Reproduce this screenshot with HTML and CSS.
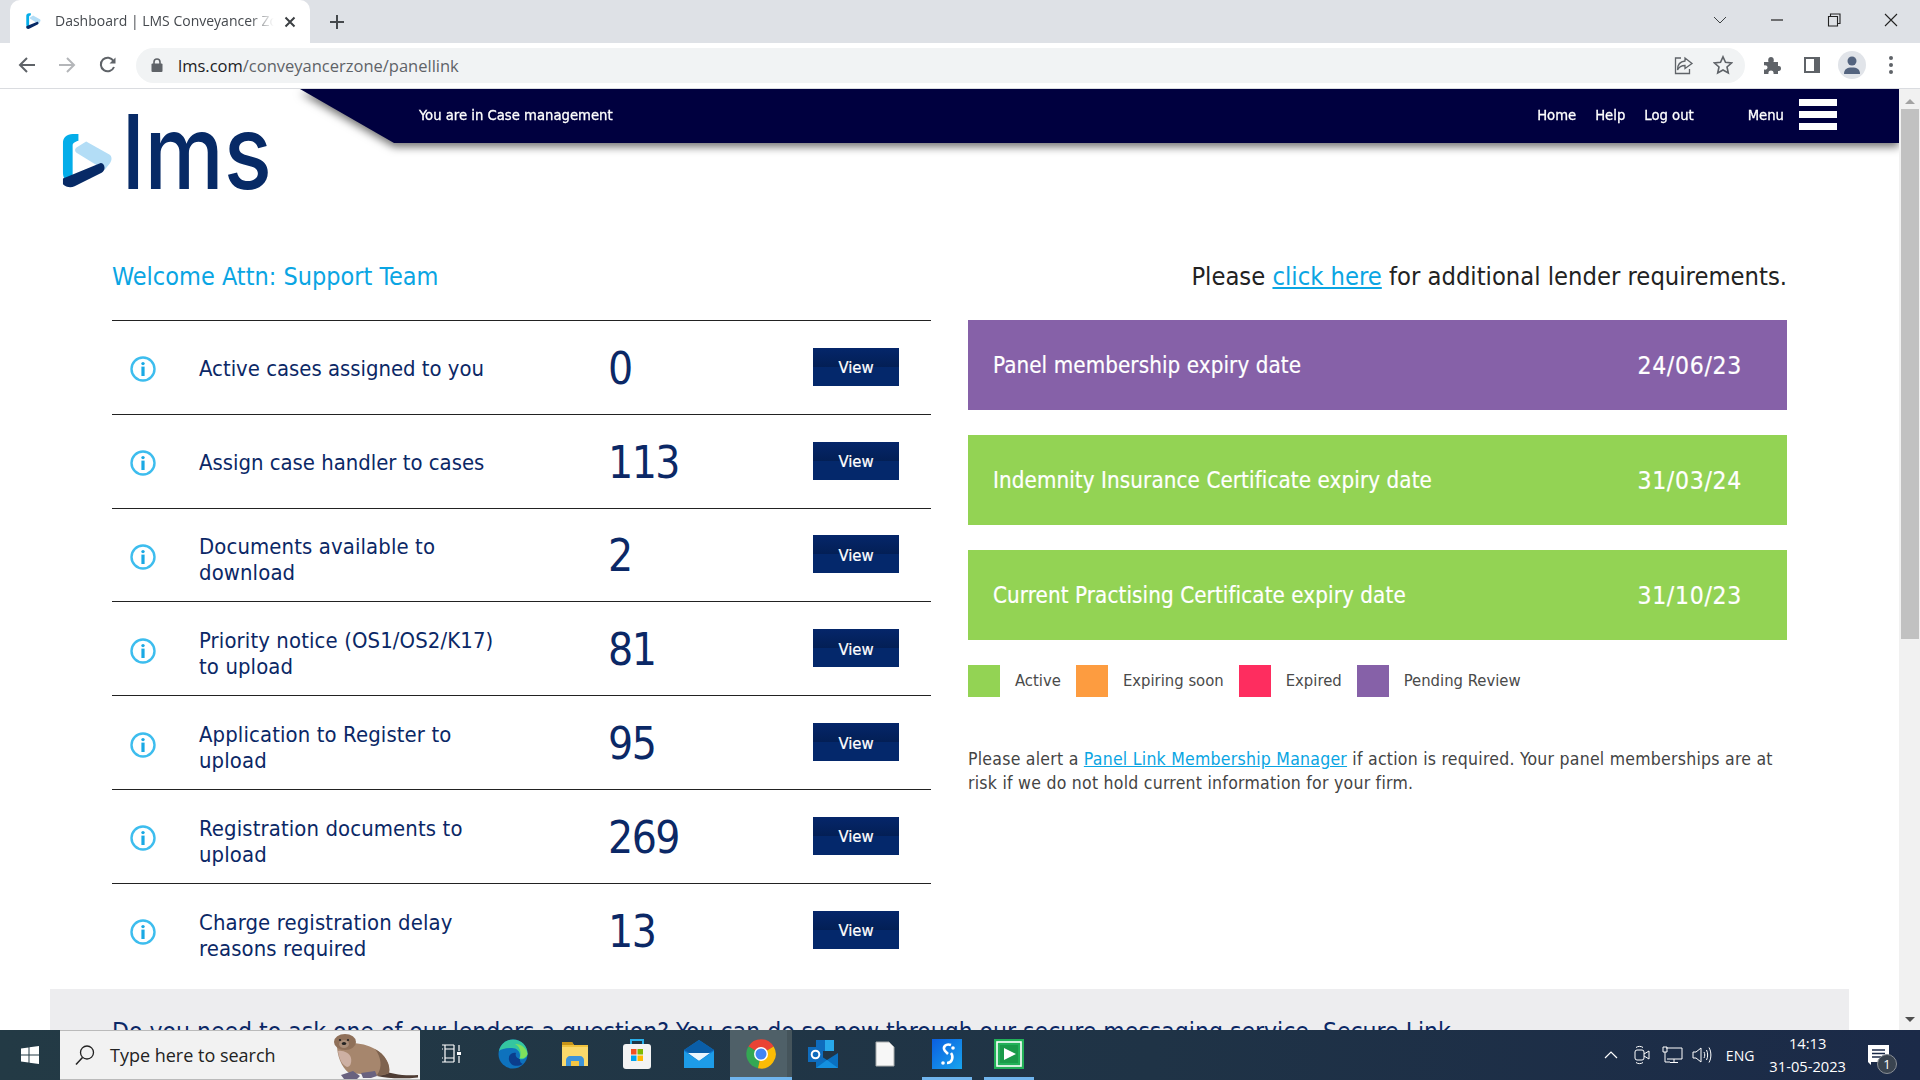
FILE: index.html
```html
<!DOCTYPE html>
<html lang="en">
<head>
<meta charset="utf-8">
<title>Dashboard | LMS Conveyancer Zone</title>
<link rel="stylesheet" href="styles.css">
</head>
<body>
<svg class="defs" width="0" height="0" aria-hidden="true">
  <symbol id="info" viewBox="0 0 26 26">
    <circle cx="13" cy="13" r="11.5" fill="none" stroke="#3dbdee" stroke-width="2.4"/>
    <circle cx="13" cy="7.6" r="1.7" fill="#1aa9e4"/>
    <rect x="11.4" y="10.6" width="3.2" height="9.4" fill="#1aa9e4"/>
  </symbol>
  <symbol id="mark" viewBox="0 0 60 60">
    <path d="M17 1H11C5 1 1 5 1 10V41C1 47 4 50 9 52L11 52V13C11 10 14 9 17 8Z" fill="#04ade9"/>
    <path d="M15 10L25 3L49 18C52 20 52 25 49 29L44 36L15 16C13 14 13 12 15 10Z" fill="#b3ddf6" transform="translate(0 6) scale(1 .9)"/>
    <path d="M1 47L40 31C42 31 44 33 44 36C44 38 43 40 41 41L13 55C9 57 4 56 1 53Z" fill="#072a66"/>
  </symbol>
</svg>

<div class="browser">
  <div class="tabstrip">
    <div class="tab">
      <svg class="fav" width="17" height="19"><use href="#mark"/></svg>
      <span class="tab-title">Dashboard | LMS Conveyancer Zone</span>
      <svg class="tab-x" width="12" height="12" viewBox="0 0 12 12"><path d="M1.5 1.5L10.5 10.5M10.5 1.5L1.5 10.5" stroke="#3c4043" stroke-width="2"/></svg>
    </div>
    <svg class="tab-plus" width="16" height="16" viewBox="0 0 16 16"><path d="M8 1V15M1 8H15" stroke="#45494d" stroke-width="2"/></svg>
    <div class="winctl">
      <svg width="14" height="14" viewBox="0 0 14 14"><path d="M1 4L7 10L13 4" fill="none" stroke="#3c4043"/></svg>
      <svg width="14" height="14" viewBox="0 0 14 14"><path d="M1 7H13" stroke="#222" stroke-width="1.2"/></svg>
      <svg width="14" height="14" viewBox="0 0 14 14"><path d="M1.5 3.5H10.5V13H1.5ZM3.5 3.5V1H13V10.5H10.5" fill="none" stroke="#222" stroke-width="1.1"/></svg>
      <svg width="14" height="14" viewBox="0 0 14 14"><path d="M1 1L13 13M13 1L1 13" stroke="#222" stroke-width="1.1"/></svg>
    </div>
  </div>
  <div class="toolbar">
    <div class="navbtns">
      <svg width="18" height="18" viewBox="0 0 18 18"><path d="M17 9H2M9 2L2 9L9 16" fill="none" stroke="#5f6368" stroke-width="2"/></svg>
      <svg width="18" height="18" viewBox="0 0 18 18"><path d="M1 9H16M9 2L16 9L9 16" fill="none" stroke="#b4b6b9" stroke-width="2"/></svg>
      <svg class="reload" width="18" height="18" viewBox="0 0 18 18"><path d="M15 11A6.8 6.8 0 1 1 14.5 5" fill="none" stroke="#5f6368" stroke-width="2"/><path d="M16.5 1.5V7.5H10.5Z" fill="#5f6368"/></svg>
    </div>
    <div class="omnibox">
      <svg class="lock" width="12" height="14" viewBox="0 0 12 14"><path d="M3 6V4A3 3 0 0 1 9 4V6" fill="none" stroke="#5f6368" stroke-width="1.6"/><rect x="0.5" y="5.5" width="11" height="8.5" rx="1" fill="#5f6368"/></svg>
      <span class="url"><b>lms.com</b>/conveyancerzone/panellink</span>
      <span class="omni-end">
        <svg width="20" height="20" viewBox="0 0 20 20"><path d="M11 3L18 8.5L11 13.5V10.5C7 10.5 5 12 3.500 15C3.500 10 6 6.500 11 6Z" fill="none" stroke="#5f6368" stroke-width="1.3"/><path d="M7 3H1.500V18.500H15.500V14" fill="none" stroke="#5f6368" stroke-width="1.3"/></svg>
        <svg width="20" height="20" viewBox="0 0 20 20"><path d="M10 1.800L12.500 7.300L18.500 8L14 12L15.300 18L10 15L4.700 18L6 12L1.500 8L7.500 7.300Z" fill="none" stroke="#5f6368" stroke-width="1.6"/></svg>
      </span>
    </div>
    <div class="tool-icons">
      <svg class="puzzle" width="18" height="18" viewBox="0 0 18 18"><path d="M1 6H5.500C4.500 3 6 1 8 1C10 1 11.500 3 10.500 6H15V10C17.500 9.500 18 11 18 12.500C18 14 17 15.500 15 15V18H10.500C11 15.500 9.500 14.500 8 14.500C6.500 14.500 5 15.500 5.500 18H1V13.500C3 14 4.500 13 4.500 11.500C4.500 10 3 9 1 9.500Z" fill="#5f6368"/></svg>
      <svg width="18" height="18" viewBox="0 0 18 18"><rect x="1" y="1" width="16" height="16" fill="#5f6368"/><rect x="3" y="3" width="8" height="12" fill="#fff"/></svg>
      <span class="avatar"><svg width="18" height="20" viewBox="0 0 18 20"><circle cx="9" cy="6" r="4.500" fill="#54647f"/><path d="M1 19C1 14 4 12.500 9 12.500C14 12.500 17 14 17 19Z" fill="#54647f"/></svg></span>
      <svg class="dots" width="6" height="20" viewBox="0 0 6 20"><circle cx="3" cy="3" r="2" fill="#5f6368"/><circle cx="3" cy="10" r="2" fill="#5f6368"/><circle cx="3" cy="17" r="2" fill="#5f6368"/></svg>
    </div>
  </div>
</div>

<div class="viewport">
  <main class="page">
    <div class="masthead">
      <a class="logo" href="#">
        <svg width="236" height="90" viewBox="0 0 236 90">
          <use href="#mark" x="0" y="20" width="58" height="58"/>
          <text class="wordmark" x="60" y="76" textLength="150" lengthAdjust="spacingAndGlyphs">lms</text>
        </svg>
      </a>
      <div class="band-wrap">
        <header class="band">
          <span class="band-where">You are in Case management</span>
          <nav class="band-nav">
            <a href="#">Home</a><a href="#">Help</a><a href="#">Log out</a>
          </nav>
          <div class="band-menu">
            <span>Menu</span>
            <span class="burger"><i></i><i></i><i></i></span>
          </div>
        </header>
      </div>
    </div>

    <div class="greeting">
      <h1>Welcome Attn: Support Team</h1>
      <p>Please <a href="#">click here</a> for additional lender requirements.</p>
    </div>

    <div class="columns">
      <section class="cases">
        <div class="case"><svg class="info" width="26" height="26"><use href="#info"/></svg><span class="case-label">Active cases assigned to you</span><span class="case-num">0</span><a class="view" href="#">View</a></div>
        <div class="case"><svg class="info" width="26" height="26"><use href="#info"/></svg><span class="case-label">Assign case handler to cases</span><span class="case-num">113</span><a class="view" href="#">View</a></div>
        <div class="case"><svg class="info" width="26" height="26"><use href="#info"/></svg><span class="case-label two">Documents available to<br>download</span><span class="case-num">2</span><a class="view" href="#">View</a></div>
        <div class="case"><svg class="info" width="26" height="26"><use href="#info"/></svg><span class="case-label two">Priority notice (OS1/OS2/K17)<br>to upload</span><span class="case-num">81</span><a class="view" href="#">View</a></div>
        <div class="case"><svg class="info" width="26" height="26"><use href="#info"/></svg><span class="case-label two">Application to Register to<br>upload</span><span class="case-num">95</span><a class="view" href="#">View</a></div>
        <div class="case"><svg class="info" width="26" height="26"><use href="#info"/></svg><span class="case-label two">Registration documents to<br>upload</span><span class="case-num">269</span><a class="view" href="#">View</a></div>
        <div class="case"><svg class="info" width="26" height="26"><use href="#info"/></svg><span class="case-label two">Charge registration delay<br>reasons required</span><span class="case-num">13</span><a class="view" href="#">View</a></div>
      </section>
      <section class="status">
        <div class="card purple"><span>Panel membership expiry date</span><span class="date">24/06/23</span></div>
        <div class="card green"><span>Indemnity Insurance Certificate expiry date</span><span class="date">31/03/24</span></div>
        <div class="card green"><span>Current Practising Certificate expiry date</span><span class="date">31/10/23</span></div>
        <div class="legend">
          <i class="sw green"></i><span>Active</span>
          <i class="sw orange"></i><span>Expiring soon</span>
          <i class="sw red"></i><span>Expired</span>
          <i class="sw purple"></i><span>Pending Review</span>
        </div>
        <p class="alert">Please alert a <a href="#">Panel Link Membership Manager</a> if action is required. Your panel memberships are at risk if we do not hold current information for your firm.</p>
      </section>
    </div>

    <div class="secure">Do you need to ask one of our lenders a question? You can do so now through our secure messaging service. Secure Link</div>
  </main>
  <aside class="scrollbar">
    <i class="arrow up"></i>
    <i class="thumb"></i>
    <i class="arrow down"></i>
  </aside>
</div>

<footer class="taskbar">
  <svg class="start" width="18" height="18" viewBox="0 0 18 18"><path d="M0 2.500L7.500 1.400V8.500H0ZM8.500 1.300L18 0V8.500H8.500ZM0 9.500H7.500V16.600L0 15.500ZM8.500 9.500H18V18L8.500 16.700Z" fill="#fff"/></svg>
  <div class="search">
    <svg width="22" height="22" viewBox="0 0 22 22"><circle cx="13" cy="8.500" r="6.500" fill="none" stroke="#222" stroke-width="1.300"/><path d="M8.500 13.500L2 20.500" stroke="#222" stroke-width="1.500"/></svg>
    <span>Type here to search</span>
    <svg class="otter" width="88" height="46" viewBox="0 0 88 46">
      <path d="M50 37C60 41 72 43 87 42L87 44.500C72 46 56 45.500 46 43Z" fill="#4e3c34"/>
      <path d="M6 12C18 8 34 10 44 16C54 21 60 32 58 40C50 44 36 43 30 41L18 40C10 34 6 22 6 12Z" fill="#a6866d"/>
      <path d="M44 16C54 21 60 32 58 40C55 42 50 42 46 42C52 34 50 24 44 16Z" fill="#7e634f"/>
      <path d="M7 18C12 17 19 20 20 25C21 30 19 34 16 34C11 32 8 26 7 18Z" fill="#cdb0a3"/>
      <ellipse cx="14" cy="9" rx="11" ry="8" fill="#8f7059"/>
      <ellipse cx="13" cy="11" rx="5" ry="4" fill="#a98d78"/>
      <circle cx="9" cy="7" r="1.100" fill="#222"/><circle cx="17" cy="7" r="1.100" fill="#222"/><ellipse cx="13" cy="10.500" rx="2.200" ry="1.500" fill="#222"/>
      <path d="M10 42L22 38L29 43L26 46L13 46ZM30 40L44 38L46 43L40 45L32 45Z" fill="#69627f"/>
    </svg>
  </div>
  <div class="apps">
    <span class="app"><svg width="20" height="20" viewBox="0 0 20 20"><path d="M1 1H13M4 5H13V14H4ZM1 5H2M1 14H2M1 18H13M4 5V1M4 18V14M13 5V1M13 18V14M18 1V7M18 12V19" fill="none" stroke="#fff" stroke-width="1.200"/><rect x="16" y="8" width="4" height="3" fill="#fff"/></svg></span>
    <span class="app"><svg width="30" height="30" viewBox="0 0 30 30"><circle cx="15" cy="15" r="14.500" fill="#0e72bd"/><path d="M1 12C3 4 9 .5 15 .5C24 .5 30 8 29.500 15C29 19 25 21 21 20C24 15 20 9 14 9C8 9 3 10 1 12Z" fill="#35c6a0"/><path d="M22 20C18 19 17 16 18 14C14 13 10 16 11 21C12 26 18 29 25 25C22 24 22 22 22 20Z" fill="#0b3d8c"/><path d="M17 5C24 5 29 10 29.500 15C28 19 25 20 22 19C24 12 21 7 17 5Z" fill="#7fe05c"/></svg></span>
    <span class="app"><svg width="28" height="26" viewBox="0 0 28 26"><path d="M1 1H11L13 4H27V25H1Z" fill="#f0c23d"/><path d="M1 1H11L13 4H1Z" fill="#c79418"/><path d="M1 6H27V25H1Z" fill="#fbd96a"/><path d="M5 25V19C5 17 7 15 9 15H19C21 15 23 17 23 19V25H18V20H10V25Z" fill="#3e93d8"/><rect x="10" y="20" width="8" height="5" fill="#f5c542"/></svg></span>
    <span class="app"><svg width="30" height="30" viewBox="0 0 30 30"><path d="M9 5V1H21V5" fill="none" stroke="#2ab0ea" stroke-width="2"/><rect x="1" y="5" width="28" height="25" rx="3" fill="#f3f3f3"/><rect x="9" y="10" width="5.500" height="5.500" fill="#f25022"/><rect x="15.500" y="10" width="5.500" height="5.500" fill="#7fba00"/><rect x="9" y="16.500" width="5.500" height="5.500" fill="#00a4ef"/><rect x="15.500" y="16.500" width="5.500" height="5.500" fill="#ffb900"/></svg></span>
    <span class="app"><svg width="30" height="28" viewBox="0 0 30 28"><path d="M0 10L15 0L30 10V28H0Z" fill="#1178d0"/><path d="M0 10L15 0L30 10L15 18Z" fill="#0a5ea8"/><path d="M4 13H26L15 21Z" fill="#eaf6fd"/><path d="M0 11L15 21L30 11V28H0Z" fill="#1d9ce8"/></svg></span>
    <span class="app active"><svg width="30" height="30" viewBox="0 0 30 30"><path d="M15 15L2.400 7.500A14.500 14.500 0 0 1 27.600 7.500Z" fill="#ea4335"/><path d="M15 15L2.400 7.500A14.500 14.500 0 0 0 12 29.200Z" fill="#34a853"/><path d="M15 15L27.600 7.500A14.500 14.500 0 0 1 12 29.200Z" fill="#fbbc05"/><circle cx="15" cy="15" r="7" fill="#fff"/><circle cx="15" cy="15" r="5.500" fill="#4285f4"/></svg></span>
    <span class="app"><svg width="30" height="28" viewBox="0 0 30 28"><path d="M8 0H26V11H8Z" fill="#0f6cbd"/><path d="M17 0H26V11H17Z" fill="#28a8ea"/><path d="M8 13L19 20L30 13V28H8Z" fill="#0a70c0"/><path d="M8 28L19 20L30 28Z" fill="#1490df"/><rect x="0" y="7" width="15" height="15" fill="#0f6cbd"/><circle cx="7.500" cy="14.500" r="3.800" fill="none" stroke="#fff" stroke-width="2"/></svg></span>
    <span class="app"><svg width="20" height="26" viewBox="0 0 20 26"><path d="M1 1H14L19 6V25H1Z" fill="#f7f7f7" stroke="#a9adad"/></svg></span>
    <span class="app under"><svg width="30" height="30" viewBox="0 0 30 30"><defs><linearGradient id="sg" x1="0" y1="0" x2="1" y2="1"><stop offset="0" stop-color="#0a5ee0"/><stop offset="1" stop-color="#19a5ee"/></linearGradient></defs><rect width="30" height="30" fill="url(#sg)"/><path d="M19 6C14 4 10 8 13 12L16 15" fill="none" stroke="#fff" stroke-width="2.500"/><path d="M19 14C22 18 20 24 15 24" fill="none" stroke="#fff" stroke-width="2.500"/><circle cx="21" cy="9" r="1.800" fill="#fff"/><circle cx="11" cy="24" r="1.800" fill="#fff"/></svg></span>
    <span class="app under"><svg width="30" height="30" viewBox="0 0 30 30"><rect width="30" height="30" fill="#22b158"/><rect x="3" y="3" width="24" height="24" fill="none" stroke="#fff" stroke-width="1.600"/><rect x="6" y="6" width="18" height="18" fill="#1a9a49"/><path d="M10 9L22 15L10 21Z" fill="#fff"/></svg></span>
  </div>
  <div class="tray">
    <svg class="caret" width="14" height="14" viewBox="0 0 14 14"><path d="M1 10L7 4L13 10" fill="none" stroke="#fff" stroke-width="1.200"/></svg>
    <svg width="16" height="20" viewBox="0 0 16 20"><rect x="1" y="5" width="9" height="10" rx="2" fill="none" stroke="#fff"/><path d="M10 9L15 6V14L10 11M2 2.500C4 1 7 1 9 2.500M2 17.500C4 19 7 19 9 17.500" fill="none" stroke="#fff"/></svg>
    <svg width="21" height="18" viewBox="0 0 21 18"><path d="M4 2H20V13H5M12 13V16M8 16.500H16M1 1H5V6H1ZM3 6V16H8" fill="none" stroke="#fff"/></svg>
    <svg class="vol" width="20" height="18" viewBox="0 0 20 18"><path d="M1 6H4L9 2V16L4 12H1ZM12 6C13 8 13 10 12 12M14.500 4C16 7 16 11 14.500 14M17 1.500C19.500 6 19.500 12 17 16.500" fill="none" stroke="#fff"/></svg>
    <span class="lang">ENG</span>
    <span class="clock"><span>14:13</span><span>31-05-2023</span></span>
    <span class="notify">
      <svg width="21" height="20" viewBox="0 0 21 20"><path d="M0 0H21V17H3V20L0 17Z" fill="#fff"/><path d="M4 5H17M4 8.500H17M4 12H13" stroke="#1b2a48" stroke-width="1.300"/></svg>
      <b>1</b>
    </span>
  </div>
</footer>
</body>
</html>
```

FILE: styles.css
```css
* { box-sizing: border-box; }
html, body { margin: 0; height: 100%; }
body {
  width: 1920px;
  height: 1080px;
  overflow: hidden;
  display: flex;
  flex-direction: column;
  background: #fff;
  font-family: "DejaVu Sans Condensed", "DejaVu Sans", sans-serif;
}
a { text-decoration: none; }
.defs { position: absolute; }

/* browser chrome */
.browser { flex: none; font-family: "Open Sans", sans-serif; }
.tabstrip {
  height: 43px;
  background: #dee1e6;
  display: flex;
  align-items: center;
  padding-left: 10px;
}
.tab {
  position: relative;
  width: 300px;
  height: 43px;
  background: #fff;
  border-radius: 10px 10px 0 0;
  display: flex;
  align-items: center;
  padding: 0 14px 0 16px;
}
.fav { flex: none; margin-right: 12px; }
.tab-title {
  flex: 1;
  font-size: 14px;
  color: #45494e;
  white-space: nowrap;
  overflow: hidden;
  padding-bottom: 2px;
  -webkit-mask-image: linear-gradient(to right, #000 88%, transparent 99%);
  mask-image: linear-gradient(to right, #000 88%, transparent 99%);
}
.tab-x { flex: none; margin-left: 8px; }
.tab-plus { margin-left: 19px; }
.winctl {
  margin-left: auto;
  display: flex;
  gap: 43px;
  padding-right: 22px;
  margin-top: -4px;
}
.toolbar {
  height: 46px;
  background: #fff;
  border-bottom: 1px solid #dadce0;
  display: flex;
  align-items: center;
  padding: 0 0 1px 18px;
}
.navbtns { display: flex; gap: 22px; width: 118px; flex: none; }
.reload { margin-left: 1px; }
.omnibox {
  flex: none;
  width: 1609px;
  height: 35px;
  border-radius: 18px;
  background: #f1f3f4;
  display: flex;
  align-items: center;
  padding: 0 12px 0 15px;
}
.lock { flex: none; }
.url { margin-left: 15px; font-size: 16.500px; color: #5f6368; }
.url b { font-weight: 400; color: #202124; }
.omni-end { margin-left: auto; display: flex; gap: 19px; }
.tool-icons { display: flex; align-items: center; gap: 19px; margin-left: 18px; }
.puzzle { margin-right: 3px; }
.dots { margin-left: 5px; }
.avatar {
  width: 28px;
  height: 28px;
  border-radius: 50%;
  background: #e1e4e9;
  display: flex;
  align-items: center;
  justify-content: center;
  margin: 0 -2px;
}

/* scroll area */
.viewport { flex: 1; min-height: 0; display: flex; }
.page { flex: none; width: 1899px; overflow: hidden; }
.scrollbar {
  flex: none;
  width: 21px;
  background: #f1f1f1;
  display: flex;
  flex-direction: column;
  align-items: center;
}
.thumb { width: 18px; height: 530px; background: #c1c1c1; margin-top: 5px; }
.arrow { width: 0; height: 0; border-left: 5px solid transparent; border-right: 5px solid transparent; }
.arrow.up { border-bottom: 5px solid #a3a3a3; margin-top: 10px; }
.arrow.down { border-top: 5px solid #505050; margin-top: auto; margin-bottom: 8px; }

/* masthead */
.masthead { display: flex; height: 128px; }
.logo { flex: none; width: 300px; padding: 24px 0 0 62px; }
.logo svg { display: block; overflow: visible; }
.wordmark {
  font-family: Inter, "Noto Sans", sans-serif;
  font-size: 103px;
  font-weight: 500;
  fill: #072a66;
}
.band-wrap { flex: 1; height: 54px; filter: drop-shadow(0 4px 4px rgba(0, 0, 0, .55)); }
.band {
  height: 54px;
  background: #00003f;
  clip-path: polygon(0 0, 100% 0, 100% 100%, 94px 100%);
  display: flex;
  align-items: center;
  padding: 0 62px 3px 119px;
  color: #fff;
  font-size: 14.700px;
  -webkit-text-stroke: .3px #fff;
}
.band-where { flex: 1; }
.band-nav { display: flex; gap: 19px; }
.band-nav a { color: #fff; }
.band-menu { display: flex; align-items: center; gap: 15px; margin-left: 54px; }
.burger { display: flex; flex-direction: column; gap: 5px; width: 38px; }
.burger i { display: block; height: 7px; background: #fff; }

/* greeting */
.greeting {
  display: flex;
  justify-content: space-between;
  align-items: center;
  height: 103px;
  padding: 16px 112px 0;
}
.greeting h1 { margin: 0; font-size: 25px; font-weight: 400; color: #0aa5e3; }
.greeting p { margin: 0; font-size: 25.300px; color: #222; }
.greeting p a { color: #0aa5e3; text-decoration: underline; }

/* columns */
.columns {
  display: grid;
  grid-template-columns: 819px 819px;
  column-gap: 37px;
  padding: 0 112px;
}
.case {
  height: 93.800px;
  padding-top: 1px;
  border-top: 1px solid #222;
  display: grid;
  grid-template-columns: 87px 409px 205px 86px;
  align-items: center;
}
.info { margin-left: 18px; margin-top: 3px; }
.case-label { font-size: 21.900px; line-height: 26px; color: #0b2866; padding-top: 3px; }
.case-label.two { padding-top: 10px; letter-spacing: .12px; }
.case-num { font-size: 44px; line-height: 1; color: #0b2866; letter-spacing: -1.500px; padding-top: 2px; }
.view {
  height: 38px;
  margin-top: -2px;
  padding-top: 2px;
  display: flex;
  align-items: center;
  justify-content: center;
  background: linear-gradient(#05266a, #031f55 50%, #04286b 50%);
  color: #fff;
  font-size: 16.500px;
  -webkit-text-stroke: .2px #fff;
}
.status { display: flex; flex-direction: column; }
.card {
  height: 90px;
  margin-bottom: 25px;
  display: flex;
  align-items: center;
  justify-content: space-between;
  padding: 0 45px 0 25px;
  color: #fff;
  font-size: 22.200px;
  letter-spacing: .1px;
  -webkit-text-stroke: .2px #fff;
}
.date { font-size: 24.500px; letter-spacing: .7px; }
.purple { background: #8661a8; }
.green { background: #93d354; }
.orange { background: #fd9c40; }
.red { background: #fe2d5f; }
.legend {
  display: flex;
  align-items: center;
  gap: 15px;
  font-size: 16.500px;
  color: #4a4a4a;
}
.legend span { padding-bottom: 2px; }
.sw { width: 32px; height: 32px; flex: none; }
.alert {
  margin: 50px 0 0;
  font-size: 17.500px;
  letter-spacing: .25px;
  line-height: 24px;
  color: #444;
}
.alert a { color: #0aa5e3; text-decoration: underline; }

.secure {
  margin: 12px 50px 0;
  height: 100px;
  background: #ededef;
  padding: 28px 0 0 62px;
  font-size: 24.500px;
  color: #0b2866;
  white-space: nowrap;
}

/* taskbar */
.taskbar {
  flex: none;
  height: 50px;
  background: linear-gradient(to right, #233a45, #1f3346 60%, #1b2a48);
  display: flex;
  align-items: center;
  color: #fff;
  font-family: "Open Sans", sans-serif;
}
.start { flex: none; margin: 0 21px; }
.search {
  position: relative;
  flex: none;
  width: 360px;
  height: 50px;
  background: #f2f2f2;
  border-top: 1px solid #bbb;
  border-bottom: 1px solid #bbb;
  display: flex;
  align-items: center;
  padding-left: 14px;
  color: #222;
  font-size: 18px;
}
.search span { margin-left: 14px; }
.otter { position: absolute; right: 1px; bottom: 0; }
.apps { display: flex; height: 50px; }
.app {
  position: relative;
  width: 62px;
  height: 50px;
  display: flex;
  align-items: center;
  justify-content: center;
  padding-bottom: 3px;
}
.app.active {
  background: #4f6068;
  box-shadow: inset -5px 0 rgba(0, 0, 0, .12);
}
.app.active::after,
.app.under::after {
  content: "";
  position: absolute;
  left: 0;
  right: 0;
  bottom: 0;
  height: 3px;
  background: #70b5ee;
}
.app.under::after { left: 6px; right: 6px; }
.tray {
  margin-left: auto;
  display: flex;
  align-items: center;
  gap: 12px;
  padding-right: 31px;
}
.caret { margin-right: 4px; }
.vol { margin-left: -3px; }
.lang { font-size: 14px; margin-left: 2px; }
.clock {
  display: flex;
  flex-direction: column;
  align-items: center;
  font-size: 14.700px;
  line-height: 23px;
  margin-left: 3px;
}
.notify { position: relative; display: block; width: 21px; height: 20px; margin-left: 10px; }
.notify svg { display: block; }
.notify b {
  position: absolute;
  left: 9px;
  top: 9px;
  width: 20px;
  height: 20px;
  border-radius: 50%;
  background: #3a4450;
  border: 1px solid #8a8f96;
  font-size: 13px;
  font-weight: 400;
  line-height: 18px;
  text-align: center;
}
```
